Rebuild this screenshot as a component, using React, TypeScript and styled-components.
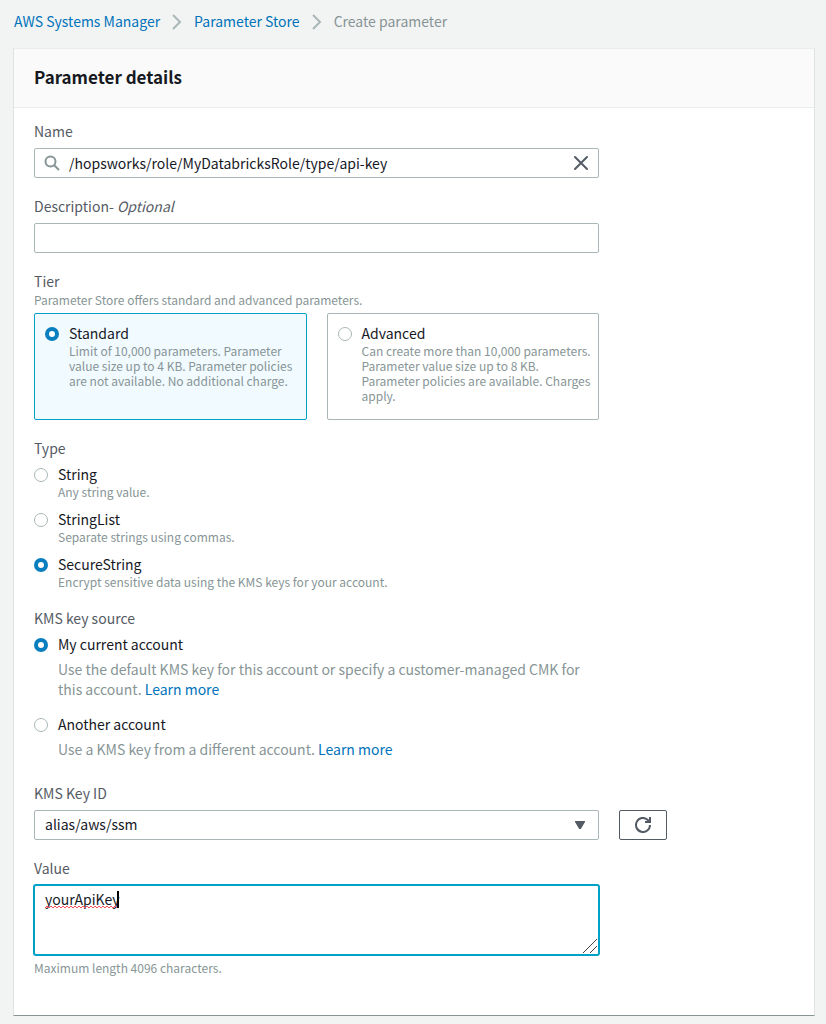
import React from "react";
import styled, { createGlobalStyle } from "styled-components";

const color = {
  page: "#f2f3f3",
  text: "#16191f",
  label: "#545b64",
  muted: "#879596",
  border: "#aab7b8",
  link: "#0073bb",
  focus: "#00a1c9",
};

const GlobalStyle = createGlobalStyle`
  *, *::before, *::after { box-sizing: border-box; }
  body {
    margin: 0;
    background: ${color.page};
    color: ${color.text};
    font: 14px/20px "Noto Sans CJK SC", "Noto Sans", sans-serif;
  }
  input, select, textarea, button { font: inherit; color: inherit; }
`;

const Page = styled.main`
  padding: 11px 11px 8px 13px;
`;

const Breadcrumbs = styled.ol`
  display: flex;
  align-items: center;
  list-style: none;
  margin: 0 0 17px;
  padding: 0 1px;
`;

const Crumb = styled.li`
  display: flex;
  align-items: center;
  color: ${color.muted};
`;

const Chevron = styled.svg`
  display: block;
  width: 10px;
  height: 16px;
  margin: 2px 12px 0;
  fill: none;
  stroke: ${color.border};
  stroke-width: 2;
`;

const Link = styled.a`
  color: ${color.link};
  text-decoration: none;
`;

const Panel = styled.section`
  background: #fff;
  border: 1px solid #dfe3e3;
  border-top-color: #eaeded;
  border-bottom-color: #879596;
`;

const PanelHeader = styled.header`
  padding: 17px 20px 19px;
  background: #fafafa;
  border-bottom: 1px solid #eaeded;
`;

const Title = styled.h2`
  margin: 0;
  font-size: 17px;
  line-height: 22px;
  font-weight: 700;
`;

const Form = styled.form`
  display: flex;
  flex-direction: column;
  gap: 18px;
  padding: 13px 20px 40px;
`;

const Field = styled.div`
  width: calc(75% - 5px);
`;

const Group = styled.fieldset<{ $after?: number }>`
  width: calc(75% - 5px);
  min-width: 0;
  margin: 0 0 ${(p) => p.$after ?? 0}px;
  padding: 0;
  border: 0;
`;

const Label = styled.label`
  display: block;
  margin-bottom: 7px;
  color: ${color.label};
`;

const Legend = styled.legend<{ $tight?: boolean }>`
  margin-bottom: ${(p) => (p.$tight ? "1px" : "6px")};
  padding: 0;
  color: ${color.label};
`;

const Hint = styled.p`
  margin: 0;
  color: ${color.muted};
  font-size: 12px;
  line-height: 15px;
`;

const TextHint = styled(Hint)`
  margin-top: 5px;
`;

const InputWrap = styled.div`
  position: relative;
`;

const TextInput = styled.input<{ $search?: boolean }>`
  display: block;
  width: 100%;
  height: 30px;
  padding: 0 ${(p) => (p.$search ? "34px" : "10px")};
  border: 1px solid ${color.border};
  border-radius: 2px;
  background: #fff;
  outline: none;
`;

const SearchIcon = styled.svg`
  position: absolute;
  left: 10px;
  top: 7px;
  width: 16px;
  height: 16px;
  fill: none;
  stroke: ${color.muted};
  stroke-width: 2;
`;

const ClearButton = styled.button`
  position: absolute;
  right: 10px;
  top: 7px;
  width: 16px;
  height: 16px;
  padding: 0;
  border: 0;
  background: none;
  svg {
    display: block;
    fill: none;
    stroke: ${color.label};
    stroke-width: 2;
    stroke-linecap: round;
  }
`;

const Cards = styled.div`
  display: grid;
  grid-template-columns: 1fr 1fr;
  gap: 20px;
  margin-top: 6px;
`;

const Card = styled.label<{ $selected?: boolean }>`
  display: flex;
  gap: 10px;
  padding: 9px 6px 16px 10px;
  border: 1px solid ${(p) => (p.$selected ? color.focus : color.border)};
  border-radius: 2px;
  background: ${(p) => (p.$selected ? "#f1faff" : "#fff")};
`;

const Radio = styled.input`
  appearance: none;
  flex: none;
  width: 14px;
  height: 14px;
  margin: 4px 0 0;
  border: 1px solid ${color.border};
  border-radius: 50%;
  background: #fff;
  &:checked {
    border: 4px solid #0a7fc0;
  }
`;

const Options = styled.div<{ $gap: number }>`
  display: grid;
  gap: ${(p) => p.$gap}px;
`;

const Option = styled.div`
  display: flex;
  gap: 10px;
`;

const OptionLabel = styled.label`
  display: block;
`;

const Detail = styled.p`
  margin: 5px 0 0;
  color: ${color.muted};
`;

const SelectRow = styled.div`
  display: flex;
  gap: 20px;
`;

const SelectWrap = styled.div`
  position: relative;
  width: calc(75% - 5px);
`;

const Select = styled.select`
  appearance: none;
  display: block;
  width: 100%;
  height: 30px;
  padding: 0 34px 2px 10px;
  border: 1px solid ${color.border};
  border-radius: 2px;
  background: #fff;
`;

const Arrow = styled.svg`
  position: absolute;
  right: 13px;
  top: 11px;
  width: 12px;
  height: 8px;
  fill: ${color.label};
  pointer-events: none;
`;

const RefreshButton = styled.button`
  display: flex;
  align-items: center;
  justify-content: center;
  width: 48px;
  height: 30px;
  padding: 0;
  border: 1px solid ${color.label};
  border-radius: 2px;
  background: #fff;
  color: ${color.label};
`;

const TextArea = styled.textarea`
  display: block;
  width: 100%;
  height: 70px;
  padding: 3px 10px;
  border: 1px solid ${color.focus};
  border-radius: 2px;
  box-shadow: 0 0 0 1px ${color.focus};
  background: #fff;
  outline: none;
  resize: none;
`;

const ResizeGrip = styled.svg`
  position: absolute;
  right: 2px;
  bottom: 2px;
  width: 14px;
  height: 14px;
  stroke: #444;
  pointer-events: none;
`;

const TypingMarks = styled.svg`
  position: absolute;
  left: 11px;
  top: 6px;
  width: 74px;
  height: 18px;
  pointer-events: none;
`;

const tiers = [
  {
    id: "standard",
    title: "Standard",
    text: "Limit of 10,000 parameters. Parameter value size up to 4 KB. Parameter policies are not available. No additional charge.",
  },
  {
    id: "advanced",
    title: "Advanced",
    text: "Can create more than 10,000 parameters. Parameter value size up to 8 KB. Parameter policies are available. Charges apply.",
  },
];

const types = [
  { id: "String", text: "Any string value." },
  { id: "StringList", text: "Separate strings using commas." },
  { id: "SecureString", text: "Encrypt sensitive data using the KMS keys for your account." },
];

const squiggle =
  "M0 17" + Array.from({ length: 36 }, (_, i) => ` L${i * 2 + 2} ${i % 2 ? 17 : 15}`).join("");

const Separator = () => (
  <Chevron viewBox="0 0 10 16" aria-hidden="true">
    <path d="M1 1 L8 8 L1 15" />
  </Chevron>
);

export default function App() {
  const [tier, setTier] = React.useState("standard");
  const [type, setType] = React.useState("SecureString");
  const [source, setSource] = React.useState("current");
  const [name, setName] = React.useState("/hopsworks/role/MyDatabricksRole/type/api-key");
  const [value, setValue] = React.useState("yourApiKey");

  return (
    <Page>
      <GlobalStyle />
      <nav aria-label="Breadcrumb">
        <Breadcrumbs>
          <Crumb>
            <Link href="#systems-manager">AWS Systems Manager</Link>
            <Separator />
          </Crumb>
          <Crumb>
            <Link href="#parameter-store">Parameter Store</Link>
            <Separator />
          </Crumb>
          <Crumb aria-current="page">Create parameter</Crumb>
        </Breadcrumbs>
      </nav>

      <Panel>
        <PanelHeader>
          <Title>Parameter details</Title>
        </PanelHeader>
        <Form onSubmit={(e) => e.preventDefault()}>
          <Field>
            <Label htmlFor="name">Name</Label>
            <InputWrap>
              <TextInput id="name" $search value={name} onChange={(e) => setName(e.target.value)} />
              <SearchIcon viewBox="0 0 16 16" aria-hidden="true">
                <circle cx="6.5" cy="6.5" r="5" />
                <path d="M10.2 10.2 L15 15" />
              </SearchIcon>
              <ClearButton type="button" aria-label="Clear name" onClick={() => setName("")}>
                <svg width="16" height="16" viewBox="0 0 16 16">
                  <path d="M2 2 L14 14 M14 2 L2 14" />
                </svg>
              </ClearButton>
            </InputWrap>
          </Field>

          <Field>
            <Label htmlFor="description">
              Description- <em>Optional</em>
            </Label>
            <TextInput id="description" />
          </Field>

          <Group>
            <Legend $tight>Tier</Legend>
            <Hint>Parameter Store offers standard and advanced parameters.</Hint>
            <Cards>
              {tiers.map((t) => (
                <Card key={t.id} $selected={tier === t.id} htmlFor={t.id}>
                  <Radio
                    type="radio"
                    name="tier"
                    id={t.id}
                    checked={tier === t.id}
                    onChange={() => setTier(t.id)}
                  />
                  <div>
                    {t.title}
                    <Hint>{t.text}</Hint>
                  </div>
                </Card>
              ))}
            </Cards>
          </Group>

          <Group $after={1}>
            <Legend>Type</Legend>
            <Options $gap={10}>
              {types.map((t) => (
                <Option key={t.id}>
                  <Radio
                    type="radio"
                    name="type"
                    id={t.id}
                    checked={type === t.id}
                    onChange={() => setType(t.id)}
                  />
                  <div>
                    <OptionLabel htmlFor={t.id}>{t.id}</OptionLabel>
                    <Hint>{t.text}</Hint>
                  </div>
                </Option>
              ))}
            </Options>
          </Group>

          <Group $after={6}>
            <Legend>KMS key source</Legend>
            <Options $gap={15}>
              <Option>
                <Radio
                  type="radio"
                  name="source"
                  id="current"
                  checked={source === "current"}
                  onChange={() => setSource("current")}
                />
                <div>
                  <OptionLabel htmlFor="current">My current account</OptionLabel>
                  <Detail>
                    Use the default KMS key for this account or specify a customer-managed CMK for
                    this account. <Link href="#cmk">Learn more</Link>
                  </Detail>
                </div>
              </Option>
              <Option>
                <Radio
                  type="radio"
                  name="source"
                  id="another"
                  checked={source === "another"}
                  onChange={() => setSource("another")}
                />
                <div>
                  <OptionLabel htmlFor="another">Another account</OptionLabel>
                  <Detail>
                    Use a KMS key from a different account. <Link href="#other">Learn more</Link>
                  </Detail>
                </div>
              </Option>
            </Options>
          </Group>

          <div>
            <Label htmlFor="key">KMS Key ID</Label>
            <SelectRow>
              <SelectWrap>
                <Select id="key">
                  <option>alias/aws/ssm</option>
                </Select>
                <Arrow viewBox="0 0 12 8" aria-hidden="true">
                  <path d="M1 0 H11 V1 L6.8 8 H5.2 L1 1 Z" />
                </Arrow>
              </SelectWrap>
              <RefreshButton type="button" aria-label="Refresh keys">
                <svg width="16" height="16" viewBox="0 0 16 16" fill="none" stroke="currentColor" strokeWidth="2">
                  <path d="M15 8 A7 7 0 1 1 12.8 2.9 L15 5" />
                  <path d="M15 0 V5 H10" />
                </svg>
              </RefreshButton>
            </SelectRow>
          </div>

          <Field>
            <Label htmlFor="value">Value</Label>
            <InputWrap>
              <TextArea
                id="value"
                value={value}
                spellCheck={false}
                onChange={(e) => setValue(e.target.value)}
              />
              {value === "yourApiKey" && (
                <TypingMarks viewBox="0 0 74 18" aria-hidden="true">
                  <path d={squiggle} fill="none" stroke="#f0505a" />
                  <rect x="72" width="2" height="17" fill="#000" />
                </TypingMarks>
              )}
              <ResizeGrip viewBox="0 0 14 14" aria-hidden="true">
                <path d="M0 14 L14 0 M7 14 L14 7" />
              </ResizeGrip>
            </InputWrap>
            <TextHint>Maximum length 4096 characters.</TextHint>
          </Field>
        </Form>
      </Panel>
    </Page>
  );
}
